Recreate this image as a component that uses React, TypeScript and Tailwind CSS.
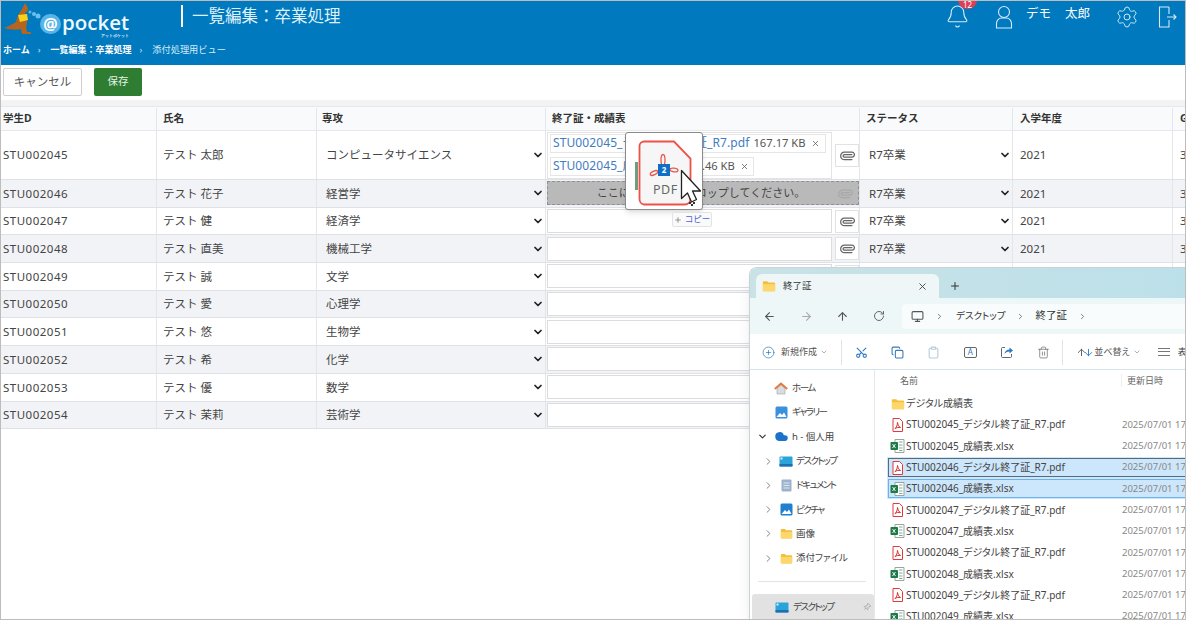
import {
  ArrowDown,
  ArrowLeft,
  ArrowRight,
  ArrowUp,
  Bell,
  ChevronDown,
  ChevronRight,
  CirclePlus,
  Clipboard,
  Cloud,
  Copy,
  Monitor,
  Paperclip,
  Pin,
  Plus,
  RotateCw,
  Scissors,
  Settings,
  Trash2,
  X,
} from "lucide-react";

const students = [
  { id: "STU002045", name: "テスト 太郎", major: "コンピュータサイエンス" },
  { id: "STU002046", name: "テスト 花子", major: "経営学" },
  { id: "STU002047", name: "テスト 健", major: "経済学" },
  { id: "STU002048", name: "テスト 直美", major: "機械工学" },
  { id: "STU002049", name: "テスト 誠", major: "文学" },
  { id: "STU002050", name: "テスト 愛", major: "心理学" },
  { id: "STU002051", name: "テスト 悠", major: "生物学" },
  { id: "STU002052", name: "テスト 希", major: "化学" },
  { id: "STU002053", name: "テスト 優", major: "数学" },
  { id: "STU002054", name: "テスト 茉莉", major: "芸術学" },
];

const files = [
  { name: "デジタル成績表", kind: "folder", date: "" },
  { name: "STU002045_デジタル終了証_R7.pdf", kind: "pdf", date: "2025/07/01 17:15" },
  { name: "STU002045_成績表.xlsx", kind: "xlsx", date: "2025/07/01 17:20" },
  { name: "STU002046_デジタル終了証_R7.pdf", kind: "pdf", date: "2025/07/01 17:15", focus: true },
  { name: "STU002046_成績表.xlsx", kind: "xlsx", date: "2025/07/01 17:20", selected: true },
  { name: "STU002047_デジタル終了証_R7.pdf", kind: "pdf", date: "2025/07/01 17:15" },
  { name: "STU002047_成績表.xlsx", kind: "xlsx", date: "2025/07/01 17:20" },
  { name: "STU002048_デジタル終了証_R7.pdf", kind: "pdf", date: "2025/07/01 17:15" },
  { name: "STU002048_成績表.xlsx", kind: "xlsx", date: "2025/07/01 17:20" },
  { name: "STU002049_デジタル終了証_R7.pdf", kind: "pdf", date: "2025/07/01 17:15" },
  { name: "STU002049_成績表.xlsx", kind: "xlsx", date: "2025/07/01 17:20" },
];

function FolderIcon({ size = 14 }: { size?: number }) {
  return (
    <svg width={size} height={size} viewBox="0 0 16 16" className="shrink-0">
      <path d="M1 3.5C1 3 1.4 2.5 2 2.5h4l1.5 1.5H14c.6 0 1 .4 1 1v8c0 .6-.4 1-1 1H2c-.6 0-1-.4-1-1z" fill="#f5bf3c" />
      <path d="M1 6h14v7c0 .6-.4 1-1 1H2c-.6 0-1-.4-1-1z" fill="#fcd76b" />
    </svg>
  );
}

function PdfFile() {
  return (
    <svg width="13" height="14" viewBox="0 0 13 14" className="shrink-0">
      <path d="M2 .5h6.500L11.500 3.500v10h-9.500z" fill="#fff" stroke="#e23a3a" />
      <path d="M4 10.500c1.500-1 2.500-3.500 2.500-6 .5 2.500 1.500 4.500 3 5-2-.3-3.800 0-5.500 1z" fill="none" stroke="#d92b2b" />
    </svg>
  );
}

function XlsxFile() {
  return (
    <svg width="15" height="14" viewBox="0 0 15 14" className="shrink-0">
      <path d="M5 .5h9v13H5z" fill="#fff" stroke="#9aa5a0" />
      <path d="M9 3h3.500M9 6h3.500M9 9h3.500M9 11.500h3.500" stroke="#7fae93" />
      <rect x="0.500" y="3" width="7.500" height="8" rx="0.800" fill="#1f7a4a" />
      <path d="M2.500 5l3 4M5.500 5l-3 4" stroke="#fff" strokeWidth="0.900" />
    </svg>
  );
}

function HomeIcon() {
  return (
    <svg width="14" height="13" viewBox="0 0 14 13">
      <path d="M3 6.500V12h8V6.500L7 3z" fill="#d9dde2" stroke="#9aa1a8" strokeWidth="0.600" />
      <path d="M.8 7L7 1.500 13.200 7" fill="none" stroke="#e2793a" strokeWidth="1.800" />
    </svg>
  );
}

function PhotoIcon({ bg = "#1f7fd1" }: { bg?: string }) {
  return (
    <svg width="13" height="13" viewBox="0 0 13 13">
      <rect x="0.500" y="0.500" width="12" height="12" rx="1.500" fill={bg} />
      <path d="M1.500 11l3.500-4 2 2 2-2.500 2.500 4.500z" fill="#fff" />
    </svg>
  );
}

function DesktopIcon() {
  return (
    <svg width="14" height="11" viewBox="0 0 14 11">
      <rect x="0.500" y="0.500" width="13" height="10" rx="1" fill="#2aa3d8" />
      <rect x="0.500" y="8" width="13" height="2.500" rx="0.500" fill="#1c6fb0" />
      <rect x="1.500" y="1.500" width="2" height="2" fill="#d8f1fb" />
    </svg>
  );
}

function DocIcon() {
  return (
    <svg width="11" height="13" viewBox="0 0 11 13">
      <rect x="0.500" y="0.500" width="10" height="12" rx="1" fill="#9db2cc" />
      <path d="M2.500 4h6M2.500 6.500h6M2.500 9h6" stroke="#f2f5f9" strokeWidth="0.800" />
    </svg>
  );
}

function ShareBoxIcon() {
  return (
    <svg width="14" height="14" viewBox="0 0 14 14" fill="none">
      <path d="M5 2.500H2.500a1 1 0 0 0-1 1v8a1 1 0 0 0 1 1h8a1 1 0 0 0 1-1V9" stroke="#666" strokeWidth="1" />
      <path d="M4.500 9c.3-3 2.500-4.500 5-4.500V2.500L13 5.500l-3.500 3V6.500C7.500 6.500 5.800 7.300 4.500 9z" fill="#2c79c7" />
    </svg>
  );
}

function SelectCell({ value }: { value: string }) {
  return (
    <div className="flex h-full w-full items-center pr-[1px]">
      <select defaultValue={value} className="h-full min-w-0 flex-1 appearance-none pl-[8px] text-[11.500px] text-[#444] outline-none">
        <option>{value}</option>
      </select>
      <ChevronDown size={12} strokeWidth={3.500} className="shrink-0 text-[#222]" />
    </div>
  );
}

function ClipButton({ faded }: { faded?: boolean }) {
  return (
    <div className={`flex h-[23px] w-[24px] shrink-0 items-center justify-center ${faded ? "" : "border border-[#e2e2e2] bg-white"}`}>
      <Paperclip size={15} strokeWidth={2} className={`rotate-[45deg] ${faded ? "text-[#a8a8a8]" : "text-[#666]"}`} />
    </div>
  );
}

function TableRow({ s, index }: { s: (typeof students)[number]; index: number }) {
  const tall = index === 0;
  const cell = "flex items-center border-r border-[#e3e6ea] min-w-0";
  return (
    <div className={`grid grid-cols-[156px_160px_229px_314px_153px_160px_60px] border-b border-[#dfe1e6] ${tall ? "h-[49px]" : "h-[27.7px]"} ${index % 2 === 1 ? "bg-[#f2f3f7]" : "bg-white"}`}>
      <div className={`${cell} pl-[2px] tracking-[0.5px]`}>{s.id}</div>
      <div className={`${cell} pl-[6px]`}>{s.name}</div>
      <div className={`${cell} pl-[1px]`}>
        <SelectCell value={s.major} />
      </div>
      <div className={`${cell} pl-[1px]`}>
        {index === 0 && (
          <>
            <div className="flex h-[47px] w-[285px] shrink-0 flex-col gap-[4px] border border-[#e4e4e4] bg-white pl-[2px] pt-[1px]">
              <div className="flex h-[19px] w-[276px] items-center border border-[#e6e6e6] pl-[2px] text-[12px]">
                <span className="whitespace-nowrap tracking-[0.1px] text-[#3f7cc0]">STU002045_デジタル終了証_R7.pdf</span>
                <span className="ml-[4px] whitespace-nowrap text-[11.200px] text-[#555]">167.17 KB</span>
                <X size={9} className="ml-[5px] text-[#555]" />
              </div>
              <div className="flex h-[19px] w-[204px] items-center border border-[#e6e6e6] pl-[2px] text-[12px]">
                <span className="whitespace-nowrap tracking-[0.1px] text-[#3f7cc0]">STU002045_成績表.xlsx</span>
                <span className="ml-[5px] whitespace-nowrap text-[11.200px] text-[#555]">21.46 KB</span>
                <X size={9} className="ml-[5px] text-[#555]" />
              </div>
            </div>
            <div className="ml-[3px]">
              <ClipButton />
            </div>
          </>
        )}
        {index === 1 && (
          <div className="flex h-[24px] w-[312px] items-center border border-dashed border-[#8f8f8f] bg-[#b9b9b9] text-[#444]">
            <span className="w-[285px] whitespace-nowrap pl-[21px] text-center text-[11px]">ここにファイルをドロップしてください。</span>
            <ClipButton faded />
          </div>
        )}
        {index > 1 && (
          <>
            <div className="h-[24px] w-[285px] shrink-0 border border-[#dcdcdc] bg-white" />
            <div className="ml-[3px]">
              <ClipButton />
            </div>
          </>
        )}
      </div>
      <div className={`${cell} pl-[1px]`}>
        <SelectCell value="R7卒業" />
      </div>
      <div className={`${cell} pl-[7px]`}>2021</div>
      <div className="flex items-center pl-[7px]">3.5</div>
    </div>
  );
}

function DragGhost() {
  return (
    <div className="absolute left-[624px] top-[131px] h-[78px] w-[78px] rounded-[3px] border border-[#8a8a8a] bg-white shadow-md">
      <div className="absolute left-[9px] top-[29px] h-[28px] w-[3px] bg-[#6d9d7c]" />
      <svg width="54" height="66" viewBox="0 0 54 66" className="absolute left-[12px] top-[7px]">
        <path d="M6 1.500h30l16.500 17v40c0 3.500-2.500 6-6 6H6c-2.500 0-4.500-2.500-4.500-6V6C1.500 3.500 3.500 1.500 6 1.500z" fill="#f6f6f6" stroke="#ee5148" strokeWidth="1.800" />
        <ellipse cx="25" cy="20" rx="2" ry="5.500" fill="none" stroke="#e9574e" strokeWidth="1.300" />
        <ellipse cx="16" cy="33" rx="4" ry="1.800" transform="rotate(-25 16 33)" fill="none" stroke="#e9574e" strokeWidth="1.300" />
        <ellipse cx="36" cy="30" rx="4" ry="1.800" transform="rotate(8 36 30)" fill="none" stroke="#e9574e" strokeWidth="1.300" />
      </svg>
      <div className="absolute left-[32px] top-[31px] flex h-[12px] w-[12px] items-center justify-center bg-[#0f6fc6] text-[8px] font-bold leading-none text-white">2</div>
      <div className="absolute left-[27px] top-[49px] text-[12.500px] leading-[16px] tracking-[0.5px] text-[#666]">PDF</div>
      <svg width="22" height="38" viewBox="0 0 22 38" className="absolute left-[54px] top-[36px]">
        <path d="M1.500 1.500v28l6-5.500 4 9 5-2.500-4-8.500h8z" fill="#fff" stroke="#222" strokeWidth="1.300" strokeLinejoin="round" />
        <path d="M9 33h2v2H9zM13 33h2v2h-2zM11 35h2v2h-2z" fill="#333" />
      </svg>
    </div>
  );
}

function CopyBadge() {
  return (
    <div className="absolute left-[671px] top-[211px] flex h-[15px] w-[40px] items-center justify-center gap-[3px] rounded-[2px] border border-[#e3e3e3] bg-[#fafafa] text-[8.500px] leading-none text-[#4a62d8]">
      <Plus size={8} strokeWidth={2} className="text-[#666]" />
      <span>コピー</span>
    </div>
  );
}

function SidebarItem({ label, icon, arrow, indent, tight }: { label: string; icon: React.ReactNode; arrow?: "right" | "down"; indent?: boolean; tight?: boolean }) {
  return (
    <div className="flex h-[24.300px] items-center text-[9.500px] text-[#444]">
      <div className={`flex w-[16px] justify-center ${indent ? "ml-[10px]" : "ml-[4px]"}`}>
        {arrow === "right" && <ChevronRight size={11} className="text-[#777]" />}
        {arrow === "down" && <ChevronDown size={11} strokeWidth={2.500} className="text-[#333]" />}
      </div>
      <div className={`flex w-[16px] justify-center ${indent ? "ml-[2px]" : "ml-[3px]"}`}>{icon}</div>
      <span className={`whitespace-nowrap ${indent ? "ml-[2px]" : "ml-[3px]"} ${tight ? "tracking-[-1.500px]" : ""}`}>{label}</span>
    </div>
  );
}

function ToolIcon({ children }: { children: React.ReactNode }) {
  return <div className="flex w-[36.400px] justify-center">{children}</div>;
}

function Explorer() {
  return (
    <div className="absolute left-[748px] top-[266px] flex h-[356px] w-[445px] flex-col overflow-hidden rounded-tl-[8px] border-l border-t border-[#c9d4d8] bg-white text-[9.500px] text-[#444] shadow-lg [font-feature-settings:'palt']">
      {/* tab strip */}
      <div className="flex h-[30px] shrink-0 items-end bg-gradient-to-r from-[#c9e2e6] to-[#bce0ea] pl-[6px]">
        <div className="flex h-[24px] w-[183px] items-center rounded-t-[6px] bg-[#eef6f7] pl-[6px]">
          <FolderIcon />
          <span className="ml-[7px] text-[9.500px] text-[#333]">終了証</span>
          <X size={11} className="ml-auto mr-[11px] text-[#444]" />
        </div>
        <Plus size={12} className="mb-[6px] ml-[10px] text-[#333]" />
      </div>
      {/* address bar */}
      <div className="flex h-[36px] shrink-0 items-center bg-[#eef7f8] pl-[13px] [&>*]:shrink-0">
        <ArrowLeft size={13} className="text-[#555]" />
        <ArrowRight size={13} className="ml-[24px] text-[#aaa]" />
        <ArrowUp size={13} className="ml-[23px] text-[#555]" />
        <RotateCw size={12} className="ml-[24px] text-[#666]" />
        <div className="ml-[17px] flex h-[25px] w-[300px] items-center rounded-l-[4px] bg-[#f8fcfd] pl-[9px] text-[10.500px] text-[#333]">
          <Monitor size={13} className="text-[#555]" />
          <ChevronRight size={9} className="ml-[11px] text-[#555]" />
          <span className="ml-[12px] text-[9.500px]">デスクトップ</span>
          <ChevronRight size={9} className="ml-[10px] text-[#555]" />
          <span className="ml-[11px]">終了証</span>
          <ChevronRight size={9} className="ml-[11px] text-[#555]" />
        </div>
      </div>
      {/* command bar */}
      <div className="flex h-[36px] shrink-0 items-center border-b border-[#d5e3e8] bg-white pl-[12px] pt-[1px] [&>*]:shrink-0">
        <CirclePlus size={13} strokeWidth={1.200} className="text-[#1f6fb5]" />
        <span className="ml-[6px] whitespace-nowrap text-[9px] text-[#555]">新規作成</span>
        <ChevronDown size={8} className="ml-[3px] text-[#888]" />
        <div className="ml-[13px] mr-[1px] h-[25px] w-px bg-[#e3e3e3]" />
        <ToolIcon><Scissors size={13} className="-rotate-90 text-[#2c79c7]" /></ToolIcon>
        <ToolIcon><Copy size={13} className="text-[#3b78b8]" /></ToolIcon>
        <ToolIcon><Clipboard size={13} className="text-[#b4cbdc]" /></ToolIcon>
        <ToolIcon>
          <div className="flex h-[11px] w-[13px] items-center justify-center rounded-[2px] border border-[#666] text-[8px] leading-none text-[#2c79c7]">A</div>
        </ToolIcon>
        <ToolIcon><ShareBoxIcon /></ToolIcon>
        <ToolIcon><Trash2 size={13} strokeWidth={1.300} className="text-[#666]" /></ToolIcon>
        <div className="ml-[1px] h-[25px] w-px bg-[#e3e3e3]" />
        <ArrowUp size={11} className="ml-[13px] text-[#555]" />
        <ArrowDown size={11} className="-ml-[4px] text-[#2c79c7]" />
        <span className="whitespace-nowrap text-[9px] text-[#555]">並べ替え</span>
        <ChevronDown size={8} className="ml-[3px] text-[#888]" />
        <div className="ml-[17px] flex h-[8px] w-[12px] flex-col justify-between border-y border-[#777]">
          <div className="mt-[2px] h-px bg-[#777]" />
        </div>
        <span className="ml-[8px] whitespace-nowrap text-[9px]">表示</span>
      </div>
      {/* body */}
      <div className="flex min-h-0 flex-1">
        <div className="flex w-[125px] shrink-0 flex-col border-r border-[#e8e8e8] pt-[6px]">
          <SidebarItem label="ホーム" tight icon={<HomeIcon />} />
          <SidebarItem label="ギャラリー" tight icon={<PhotoIcon bg="#3a90dc" />} />
          <SidebarItem label="h - 個人用" arrow="down" icon={<Cloud size={15} fill="#1a73c9" strokeWidth={0} />} />
          <SidebarItem label="デスクトップ" tight arrow="right" indent icon={<DesktopIcon />} />
          <SidebarItem label="ドキュメント" tight arrow="right" indent icon={<DocIcon />} />
          <SidebarItem label="ピクチャ" tight arrow="right" indent icon={<PhotoIcon />} />
          <SidebarItem label="画像" arrow="right" indent icon={<FolderIcon size={13} />} />
          <SidebarItem label="添付ファイル" arrow="right" indent icon={<FolderIcon size={13} />} />
          <div className="ml-[8px] mr-[8px] mt-[11px] h-px bg-[#e3e3e3]" />
          <div className="ml-[2px] mt-[12px] flex h-[26px] w-[122px] items-center rounded-[3px] bg-[#e2e2e2] pl-[23px]">
            <DesktopIcon />
            <span className="ml-[4px] whitespace-nowrap tracking-[-1.500px]">デスクトップ</span>
            <Pin size={8} className="ml-auto mr-[3px] rotate-45 text-[#999]" />
          </div>
        </div>
        <div className="min-w-0 flex-1">
          <div className="flex h-[23px] items-center pb-[2px] pl-[25px] text-[9px] text-[#666]">
            <span className="w-[221px]">名前</span>
            <span className="border-l border-[#eee] pl-[5px]">更新日時</span>
          </div>
          <div className="flex flex-col pl-[12px]">
            {files.map((f) => (
              <div
                key={f.name}
                className={`flex h-[21.300px] items-center rounded-[1px] pl-[3px] ${f.focus ? "outline outline-1 -outline-offset-2 outline-[#5a6a76] bg-[#cce6fb]" : ""} ${f.selected ? "outline outline-1 -outline-offset-2 outline-[#6db3e8] bg-[#cce6fb]" : ""}`}
              >
                <div className="flex w-[15px] shrink-0 justify-center">
                  {f.kind === "folder" && <FolderIcon />}
                  {f.kind === "pdf" && <PdfFile />}
                  {f.kind === "xlsx" && <XlsxFile />}
                </div>
                <span className="ml-[1px] w-[216px] shrink-0 whitespace-nowrap text-[10px] text-[#444]">{f.name}</span>
                <span className="whitespace-nowrap text-[#888]">{f.date}</span>
              </div>
            ))}
          </div>
        </div>
      </div>
    </div>
  );
}

export default function App() {
  return (
    <div className="relative h-[620px] w-[1186px] overflow-hidden border border-[#bdbdbd] bg-white font-['Noto_Sans','Noto_Sans_CJK_JP',sans-serif] text-[11.500px] text-[#444]">
      {/* header */}
      <header className="flex h-[64px] flex-col bg-[#0079bf] text-white">
        <div className="flex h-[37px] items-start">
          <div className="ml-[2px] mt-[1px] flex w-[176px] shrink-0 items-center">
            <svg width="38" height="33" viewBox="0 0 38 33" className="shrink-0">
              <path d="M22 0L25 5C25 7 24 9 22 10C24 14 25 19 23 24L24 29L28 29L28 31L19 31L18 26C14 27 8 27 1 25C6 23 10 21 13 19C14 14 16 10 19 6Z" fill="#b5651d" />
              <path d="M15 12L24 11L25 17L17 19Z" fill="#f6d21f" />
              <circle cx="27" cy="9" r="1.500" fill="#5eb6e6" />
              <circle cx="31" cy="11" r="2" fill="#6cc0ec" />
              <circle cx="35" cy="13" r="2.500" fill="#6cc0ec" />
            </svg>
            <div className="-ml-[1px] mt-[10px] flex h-[20px] w-[21px] items-center justify-center rounded-full bg-[#58b4e8] text-[16px] font-bold leading-none text-white">@</div>
            <div className="relative ml-[1px] mt-[6px] font-['Open_Sans',sans-serif] text-[20.500px] font-semibold leading-[28px] text-[#eef8fd]">
              pocket
              <span className="absolute right-0 top-[25px] whitespace-nowrap text-[4px] leading-[5px]">アットポケット</span>
            </div>
          </div>
          <div className="ml-[2px] mt-[4px] h-[22px] w-[2px] bg-white" />
          <div className="ml-[9px] mt-[3px] whitespace-nowrap text-[16.500px] leading-[24px] text-[#dff0f9]">一覧編集：卒業処理</div>
          <div className="relative ml-auto mr-[7px] flex items-center pt-[3px]">
            <div className="relative">
              <Bell size={25} strokeWidth={1} className="text-[#d4ecf8]" />
              <span className="absolute -top-[4px] left-[13px] flex h-[9px] w-[19px] items-center justify-center rounded-b-full bg-[#dc3f54] text-[8px] leading-none text-white">12</span>
            </div>
            <svg width="18" height="24" viewBox="0 0 18 24" fill="none" stroke="#d4ecf8" strokeWidth="1.100" className="ml-[25px]">
              <circle cx="9" cy="7" r="5.500" />
              <path d="M1.500 23v-4.500c0-3 2.500-5.500 5-5.500h5c2.500 0 5 2.500 5 5.500V23z" />
            </svg>
            <span className="ml-[13px] -mt-[4px] whitespace-nowrap text-[12.500px] text-white">デモ</span>
            <span className="ml-[14px] -mt-[4px] whitespace-nowrap text-[12.500px] text-white">太郎</span>
            <Settings size={24} strokeWidth={1} className="ml-[25px] text-[#cfe9f6]" />
            <svg width="20" height="22" viewBox="0 0 20 22" fill="none" stroke="#d4ecf8" strokeWidth="1.100" className="ml-[19px]">
              <path d="M11 1H1.500v20H11v-7M11 8V1" />
              <path d="M9 11h9M15.500 8.500L18 11l-2.500 2.500" />
            </svg>
          </div>
        </div>
        <nav className="mt-[5px] flex items-center whitespace-nowrap pl-[2px] text-[9px] leading-[14px]">
          <span className="font-bold">ホーム</span>
          <span className="ml-[8px] mr-[10px] text-[#cfe6f3]">›</span>
          <span className="font-bold">一覧編集：卒業処理</span>
          <span className="ml-[8px] mr-[10px] text-[#cfe6f3]">›</span>
          <span className="text-[9.200px] text-[#d6ebf7]">添付処理用ビュー</span>
        </nav>
      </header>

      {/* toolbar */}
      <div className="flex h-[35px] items-start gap-[12px] bg-white pl-[2px] pt-[3px]">
        <button className="h-[28px] w-[79px] rounded-[2px] border border-[#cfcfcf] bg-white text-[11.500px] text-[#555]">キャンセル</button>
        <button className="h-[28px] w-[48px] rounded-[2px] bg-[#2e7d32] text-[10.500px] text-[#e6f2e6]">保存</button>
      </div>
      <div className="h-[6px] bg-[#f3f3f3]" />

      {/* table */}
      <div className="grid h-[25px] grid-cols-[156px_160px_229px_314px_153px_160px_60px] border-y border-[#e6e8ec] bg-[#f9fafb] pt-[1px] text-[10.500px] font-bold text-[#333]">
        <div className="flex items-center border-r border-[#e3e6ea] pl-[2px]">学生D</div>
        <div className="flex items-center border-r border-[#e3e6ea] pl-[6px]">氏名</div>
        <div className="flex items-center border-r border-[#e3e6ea] pl-[5px]">専攻</div>
        <div className="flex items-center border-r border-[#e3e6ea] pl-[6px]">終了証・成績表</div>
        <div className="flex items-center border-r border-[#e3e6ea] pl-[6px]">ステータス</div>
        <div className="flex items-center border-r border-[#e3e6ea] pl-[7px]">入学年度</div>
        <div className="flex items-center pl-[7px]">GPA</div>
      </div>
      {students.map((s, i) => (
        <TableRow key={s.id} s={s} index={i} />
      ))}

      <DragGhost />
      <CopyBadge />
      <Explorer />
    </div>
  );
}
